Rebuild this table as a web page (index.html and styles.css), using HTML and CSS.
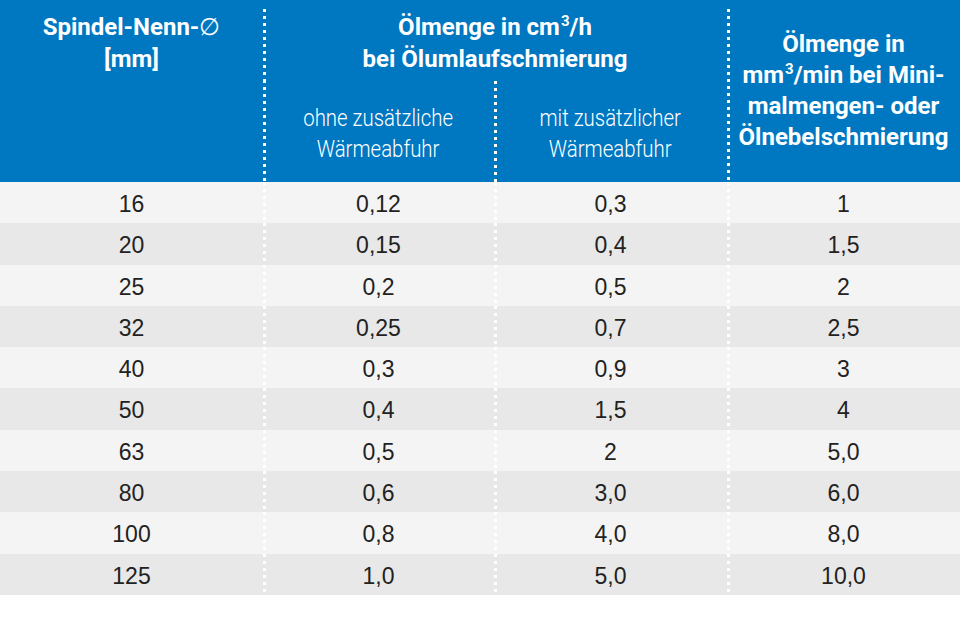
FILE: index.html
```html
<!DOCTYPE html>
<html lang="de">
<head>
<meta charset="utf-8">
<title>Ölmenge</title>
<link rel="stylesheet" href="styles.css">
</head>
<body>
<table class="oil">
  <colgroup>
    <col class="c1"><col class="c2"><col class="c3"><col class="c4">
  </colgroup>
  <thead>
    <tr class="hr-a">
      <th rowspan="2" class="h-first">Spindel-Nenn-<span class="dia">∅</span><br>[mm]</th>
      <th colspan="2" class="h-group dl dl-top">Ölmenge in cm<sup class="sup">3</sup>/h<br>bei Ölumlaufschmierung</th>
      <th rowspan="2" class="h-last dl dl-top">Ölmenge in<br>mm<sup class="sup">3</sup>/min bei Mini-<br>malmengen- oder<br>Ölnebelschmierung</th>
    </tr>
    <tr class="hr-b">
      <th class="h-sub dl"><span class="sub-txt">ohne zusätzliche<br>Wärmeabfuhr</span></th>
      <th class="h-sub dl dl-sub"><span class="sub-txt">mit zusätzlicher<br>Wärmeabfuhr</span></th>
    </tr>
  </thead>
  <tbody>
    <tr><td>16</td><td class="dl">0,12</td><td class="dl">0,3</td><td class="dl">1</td></tr>
    <tr><td>20</td><td class="dl">0,15</td><td class="dl">0,4</td><td class="dl">1,5</td></tr>
    <tr><td>25</td><td class="dl">0,2</td><td class="dl">0,5</td><td class="dl">2</td></tr>
    <tr><td>32</td><td class="dl">0,25</td><td class="dl">0,7</td><td class="dl">2,5</td></tr>
    <tr><td>40</td><td class="dl">0,3</td><td class="dl">0,9</td><td class="dl">3</td></tr>
    <tr><td>50</td><td class="dl">0,4</td><td class="dl">1,5</td><td class="dl">4</td></tr>
    <tr><td>63</td><td class="dl">0,5</td><td class="dl">2</td><td class="dl">5,0</td></tr>
    <tr><td>80</td><td class="dl">0,6</td><td class="dl">3,0</td><td class="dl">6,0</td></tr>
    <tr><td>100</td><td class="dl">0,8</td><td class="dl">4,0</td><td class="dl">8,0</td></tr>
    <tr><td>125</td><td class="dl">1,0</td><td class="dl">5,0</td><td class="dl">10,0</td></tr>
  </tbody>
</table>
</body>
</html>
```
FILE: styles.css
```css
html, body {
  margin: 0;
  padding: 0;
  background: #ffffff;
}

.oil {
  width: 960px;
  table-layout: fixed;
  border-collapse: collapse;
  border-spacing: 0;
  font-family: "Liberation Sans", Arial, sans-serif;
}

.c1 { width: 263px; }
.c2 { width: 231px; }
.c3 { width: 233px; }
.c4 { width: 233px; }

.oil th {
  background-color: #0077c1;
  color: #ffffff;
  padding: 0;
  text-align: center;
}

.hr-a { height: 80px; }
.hr-b { height: 102px; }

.h-first,
.h-group {
  font-family: Roboto, "Liberation Sans", sans-serif;
  font-weight: 700;
  font-size: 24px;
  line-height: 32px;
  vertical-align: top;
  padding-top: 11px !important;
}

.dia {
  font-family: "DejaVu Sans", sans-serif;
  font-weight: 300;
}

.sup {
  font-size: 15px;
  line-height: 0;
  vertical-align: 9px;
  margin-left: 1px;
}

.h-last {
  font-family: Roboto, "Liberation Sans", sans-serif;
  font-weight: 700;
  font-size: 24px;
  line-height: 31px;
  vertical-align: middle;
}

.h-sub {
  font-family: Roboto, "Liberation Sans", sans-serif;
  font-weight: 300;
  font-size: 24px;
  line-height: 31px;
  vertical-align: top;
  padding-top: 23px !important;
}

.sub-txt {
  display: inline-block;
  transform: scaleX(0.85);
  transform-origin: 50% 50%;
}

/* dotted white divider on the left edge of a cell */
.dl {
  background-image: linear-gradient(to bottom, #ffffff 3px, rgba(255, 255, 255, 0) 3px);
  background-size: 3px 7px;
  background-repeat: repeat-y;
  background-position: 0 0;
}

.oil th.dl-top {
  background-image:
    linear-gradient(#0077c1, #0077c1),
    linear-gradient(to bottom, #ffffff 3px, rgba(255, 255, 255, 0) 3px);
  background-size: 3px 9px, 3px 7px;
  background-repeat: no-repeat, repeat-y;
  background-position: 0 0, 0 9px;
}

.oil th.dl-sub {
  background-position: 0 1px;
}

.oil td {
  height: 41.3px;
  box-sizing: border-box;
  padding: 3px 0 0;
  line-height: 38.3px;
  font-size: 23px;
  color: #222222;
  text-align: center;
  vertical-align: top;
}

.oil tbody tr:nth-child(odd) td { background-color: #f4f4f4; }
.oil tbody tr:nth-child(even) td { background-color: #e8e8e8; }
```
